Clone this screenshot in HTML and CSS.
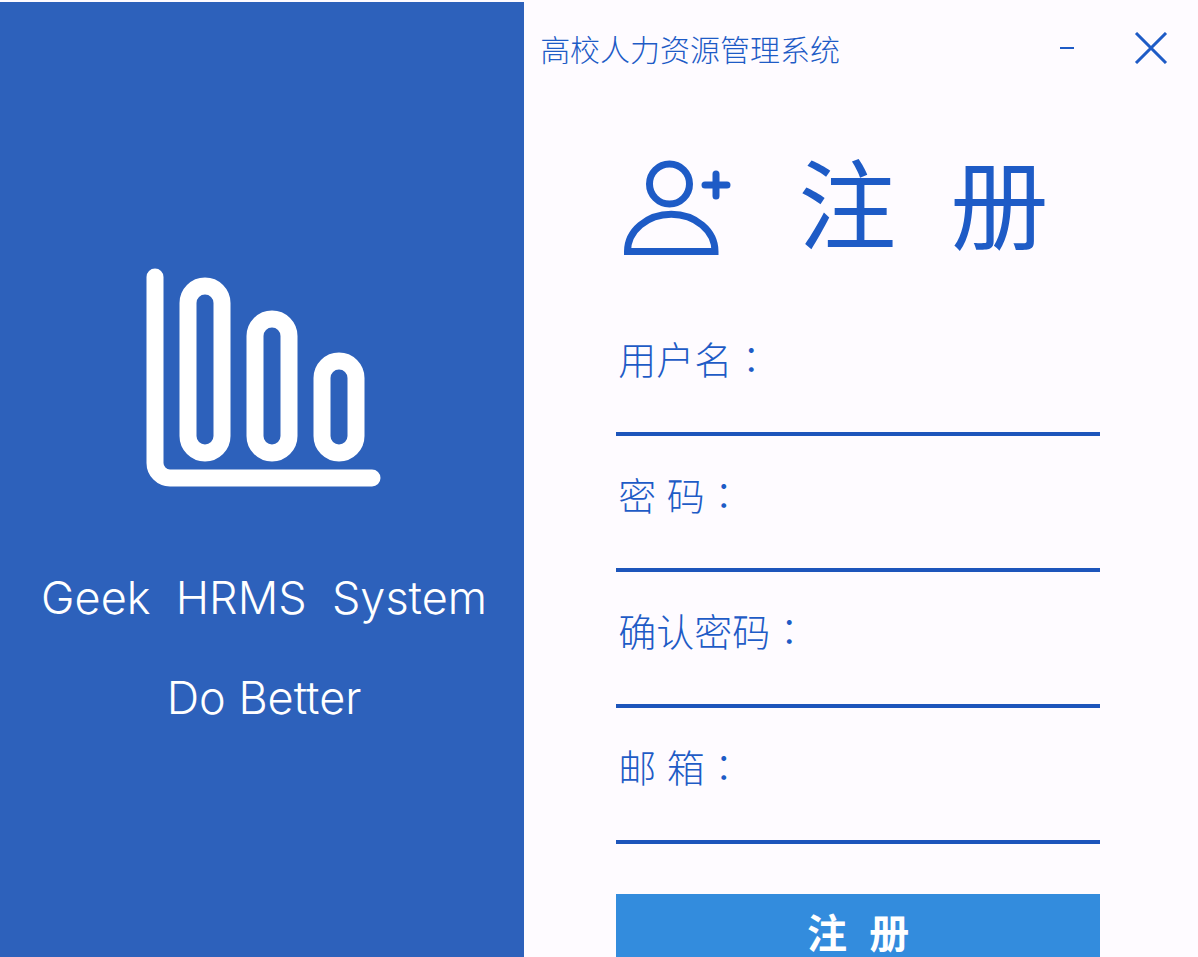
FILE: index.html
```html
<!DOCTYPE html>
<html lang="zh-CN">
<head>
<meta charset="utf-8">
<meta name="viewport" content="width=device-width, initial-scale=1">
<title>高校人力资源管理系统</title>
<link rel="stylesheet" href="styles.css">
</head>
<body>
<div class="window">
  <aside class="brand">
    <svg class="brand-logo" viewBox="0 0 236 220" fill="none" stroke="#fff" stroke-width="17" aria-hidden="true">
      <path d="M9 9V195A15 15 0 0 0 24 210H226" stroke-linecap="round"/>
      <rect x="42" y="18" width="34" height="167" rx="17"/>
      <rect x="109" y="51" width="34" height="134" rx="17"/>
      <rect x="176" y="93" width="34" height="92" rx="17"/>
    </svg>
    <p class="brand-name">Geek  HRMS  System</p>
    <p class="brand-slogan">Do Better</p>
  </aside>
  <main class="panel">
    <header class="titlebar">
      <span class="titlebar-text">高校人力资源管理系统</span>
      <button class="titlebar-button minimize" type="button" aria-label="最小化">
        <svg width="14" height="4" viewBox="0 0 14 4" stroke="currentColor" stroke-width="2"><path d="M0 2H14"/></svg>
      </button>
      <button class="titlebar-button" type="button" aria-label="关闭">
        <svg width="34" height="32" viewBox="0 0 34 32" stroke="currentColor" stroke-width="3"><path d="M2 1L32 31M32 1L2 31"/></svg>
      </button>
    </header>
    <form class="register">
      <div class="heading">
        <svg class="heading-icon" viewBox="0 0 108 96" fill="none" stroke="currentColor" stroke-width="7" aria-hidden="true">
          <circle cx="45.500" cy="24" r="20"/>
          <path d="M3.500 91.500A43.500 37 0 0 1 91 91.500Z"/>
          <path d="M92 14V36M81 25H103" stroke-linecap="round"/>
        </svg>
        <h1 class="heading-text">注  册</h1>
      </div>
      <div class="field">
        <label class="field-label" for="username">用户名<span class="colon" lang="zh-TW">：</span></label>
        <input class="field-input" id="username" type="text">
      </div>
      <div class="field">
        <label class="field-label" for="password">密 码<span class="colon" lang="zh-TW">：</span></label>
        <input class="field-input" id="password" type="password">
      </div>
      <div class="field">
        <label class="field-label" for="confirm">确认密码<span class="colon" lang="zh-TW">：</span></label>
        <input class="field-input" id="confirm" type="password">
      </div>
      <div class="field">
        <label class="field-label" for="email">邮 箱<span class="colon" lang="zh-TW">：</span></label>
        <input class="field-input" id="email" type="email">
      </div>
      <button class="submit" type="submit">注  册</button>
    </form>
  </main>
</div>
</body>
</html>
```

FILE: styles.css
```css
* {
  box-sizing: border-box;
}

body {
  margin: 0;
  background: #fefbff;
  color: #1e5bc6;
  font-family: "Liberation Sans", "Noto Sans CJK SC", sans-serif;
}

.window {
  display: grid;
  grid-template-columns: 7fr 9fr;
  height: 100vh;
  padding-top: 2px;
  overflow: hidden;
}

.brand {
  display: flex;
  flex-direction: column;
  align-items: center;
  padding: 266px 0 0 4px;
  background: #2d61bb;
  color: #fff;
  font-family: Inter, sans-serif;
  font-size: 45px;
  font-weight: 300;
  line-height: 60px;
  white-space: pre;
}

.brand-logo {
  width: 236px;
  height: 220px;
}

.brand-name {
  margin: 80px 0 40px;
}

.brand-slogan {
  margin: 0;
}

.panel {
  min-width: 0;
}

.titlebar {
  display: flex;
  align-items: center;
  height: 92px;
  padding: 0 30px 0 16px;
}

.titlebar-text {
  flex: 1;
  font-size: 30px;
  font-weight: 300;
}

.titlebar-button {
  display: flex;
  padding: 0;
  border: 0;
  background: none;
  color: #1e5bc6;
}

.minimize {
  margin-right: 60px;
}

.register {
  display: flex;
  flex-direction: column;
  padding: 0 98px 0 92px;
}

.heading {
  display: flex;
  align-items: center;
  gap: 66px;
  height: 206px;
  padding: 22px 8px 0;
}

.heading-icon {
  flex: none;
  width: 108px;
  height: 96px;
}

.heading-text {
  margin: 0;
  font-size: 98px;
  font-weight: 400;
  line-height: 120px;
  white-space: pre;
}

.field {
  display: flex;
  align-items: flex-start;
  height: 136px;
  padding-top: 30px;
  border-bottom: 4px solid #1d55bb;
}

.field-label {
  flex: none;
  padding-left: 2px;
  font-size: 38px;
  font-weight: 300;
  line-height: 56px;
}

.colon {
  font-family: "Noto Sans CJK TC", sans-serif;
}

.field-input {
  flex: 1;
  min-width: 0;
  height: 56px;
  border: 0;
  outline: 0;
  background: none;
  color: inherit;
  font: inherit;
  font-size: 32px;
}

.submit {
  height: 74px;
  margin-top: 50px;
  border: 0;
  background: #338cdd;
  color: #fff;
  font: inherit;
  font-size: 40px;
  font-weight: 700;
  white-space: pre;
}
```
